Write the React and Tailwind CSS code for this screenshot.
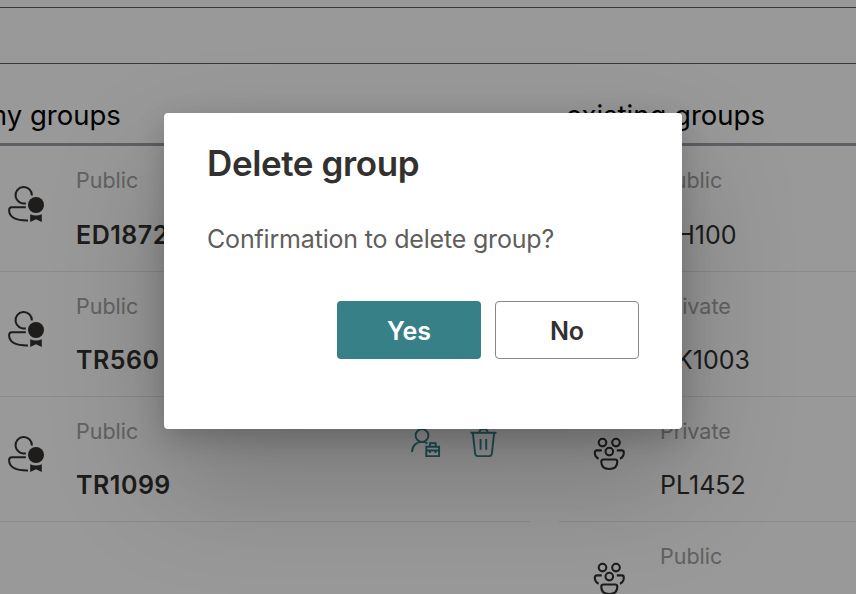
const myGroups = [
  { kind: 'Public', name: 'ED1872' },
  { kind: 'Public', name: 'TR560' },
  { kind: 'Public', name: 'TR1099', actions: true },
];

const existingGroups = [
  { kind: 'Public', name: 'TH100' },
  { kind: 'Private', name: 'SK1003' },
  { kind: 'Private', name: 'PL1452' },
  { kind: 'Public', name: '' },
];

function OwnerIcon() {
  return (
    <svg width="38" height="38" viewBox="0 0 38 38" fill="none" stroke="currentColor" strokeWidth="2" className="block">
      <path d="M18.8 18.2 A8.2 8.2 0 1 1 24.9 10.4" />
      <path d="M18.8 22.3 H4.8 Q2.1 22.3 2.1 25.3 C2.1 32.5 9 35.8 21 35.6" />
      <circle cx="29" cy="20" r="8" fill="currentColor" stroke="none" />
      <path d="M23.2 29.2 Q29 31.8 34.8 29.2 V37 L29 34.2 L23.2 37 Z" fill="currentColor" stroke="none" />
    </svg>
  );
}

function MembersIcon() {
  return (
    <svg width="34" height="34" viewBox="0 0 34 34" fill="none" stroke="currentColor" strokeWidth="2.1" className="block">
      <circle cx="10.5" cy="5.6" r="3.8" />
      <circle cx="24" cy="5.6" r="3.8" />
      <circle cx="17.3" cy="14.6" r="3.8" />
      <path d="M9.8 13.4 H5 Q2.8 13.4 2.8 15.6 Q2.8 20 6.6 21.8" />
      <path d="M24.8 13.4 H29.6 Q31.8 13.4 31.8 15.6 Q31.8 20 28 21.8" />
      <path d="M11.5 22.5 H23.1 Q25.3 22.5 25.3 24.7 C25.3 29.4 22.2 32 17.3 32 C12.4 32 9.3 29.4 9.3 24.7 Q9.3 22.5 11.5 22.5 Z" />
    </svg>
  );
}

function AssignIcon() {
  return (
    <svg width="30" height="30" viewBox="0 0 30 30" fill="none" stroke="currentColor" strokeWidth="1.9" className="block">
      <circle cx="11" cy="7.5" r="6.4" />
      <path d="M1 24 C1.2 17.6 5.5 13.9 11 13.9 Q14 13.9 16.4 15.4" />
      <path d="M15.3 18.7 H28.1 V28.1 H15.3 Z M15.3 22.5 H28.1 M19 18.7 V15.1 H24.6 V18.7 M18.9 22.5 V25 M24.5 22.5 V25" />
    </svg>
  );
}

function TrashIcon() {
  return (
    <svg width="28" height="30" viewBox="0 0 28 30" fill="none" stroke="currentColor" strokeWidth="1.9" className="block">
      <path d="M0.5 4.7 H26.5 M9.3 4.7 Q9.7 1.4 11.9 1.4 H15.1 Q17.3 1.4 17.7 4.7" />
      <path d="M2.8 4.7 L5.1 25.4 Q5.4 28.1 8 28.1 H19 Q21.6 28.1 21.9 25.4 L24.2 4.7" />
      <path d="M10.6 11 V21.8 M16.2 11 V21.8" />
    </svg>
  );
}

function Row({ group, icon, iconWidth, nameClass, first }) {
  return (
    <div className={`flex border-b border-[#e6e6e6] text-[#323130] ${first ? 'h-[126px]' : 'h-[125px]'}`}>
      <div className={`shrink-0 ${iconWidth} ${first ? 'pt-px' : ''}`}>{icon}</div>
      <div className="w-[334px] shrink-0 pt-[20px]">
        <div className="text-[21.5px] leading-[28px] text-[#a3a3a3]">{group.kind}</div>
        <div className={`text-[25px] leading-[32px] ${first ? 'mt-[25px]' : 'mt-[24px]'} ${nameClass}`}>{group.name}</div>
      </div>
      {group.actions && (
        <div className="flex gap-[29px] pt-[31px] pl-px text-[#38838a]">
          <AssignIcon />
          <TrashIcon />
        </div>
      )}
    </div>
  );
}

export default function App() {
  return (
    <div className="relative h-[594px] w-[856px] overflow-hidden bg-white font-['Inter','Liberation_Sans',sans-serif]">
      <div className="flex h-full flex-col">
        <div className="h-2 shrink-0 border-b border-[#605e5c]" />
        <div className="h-14 shrink-0 border-b border-[#605e5c]" />
        <div className="flex h-[82px] shrink-0 border-b-[3px] border-[#9fa0aa] text-[27.5px] leading-[34px] text-black">
          <div className="-ml-[17px] w-[583px] shrink-0 pt-[34px]">my groups</div>
          <div className="pt-[34px] whitespace-nowrap">existing groups</div>
        </div>
        <div className="flex">
          <div className="w-[530px] shrink-0">
            {myGroups.map((g, i) => (
              <Row
                key={g.name}
                group={g}
                first={i === 0}
                iconWidth="w-[76px]"
                nameClass="font-[590] tracking-[0.5px]"
                icon={<div className="pt-[38px] pl-[7px]"><OwnerIcon /></div>}
              />
            ))}
          </div>
          <div className="ml-[29px] w-[297px] shrink-0">
            {existingGroups.map((g, i) => (
              <div key={i} className="flex">
                <div className="w-8 shrink-0 border-b border-[#e6e6e6]" />
                <div className="grow">
                  <Row
                    group={g}
                    first={i === 0}
                    iconWidth="w-[69px]"
                    nameClass=""
                    icon={<div className="pt-[40px] pl-px"><MembersIcon /></div>}
                  />
                </div>
              </div>
            ))}
          </div>
        </div>
      </div>
      <div className="absolute inset-0 bg-black/40">
        <div className="mt-[113px] ml-[164px] flex h-[316px] w-[518px] flex-col rounded-[4px] bg-white px-[43px] shadow-[0_51.2px_115.2px_rgba(0,0,0,0.22),0_9.6px_28.8px_rgba(0,0,0,0.18)]">
          <h2 className="mt-[27px] text-[35px] leading-[46px] font-semibold tracking-[-0.4px] text-[#323130]">Delete group</h2>
          <p className="mt-[36px] text-[25px] leading-[34px] tracking-[-0.18px] whitespace-nowrap text-[#605e5c]">Confirmation to delete group?</p>
          <div className="mt-[45px] flex justify-end gap-[14px] text-[25px] font-[570]">
            <button className="h-[58px] w-[144px] rounded-[4px] bg-[#388087] pt-[4px] text-white">Yes</button>
            <button className="h-[58px] w-[144px] rounded-[4px] border border-[#8a8886] pt-[4px] text-[#323130]">No</button>
          </div>
        </div>
      </div>
    </div>
  );
}
